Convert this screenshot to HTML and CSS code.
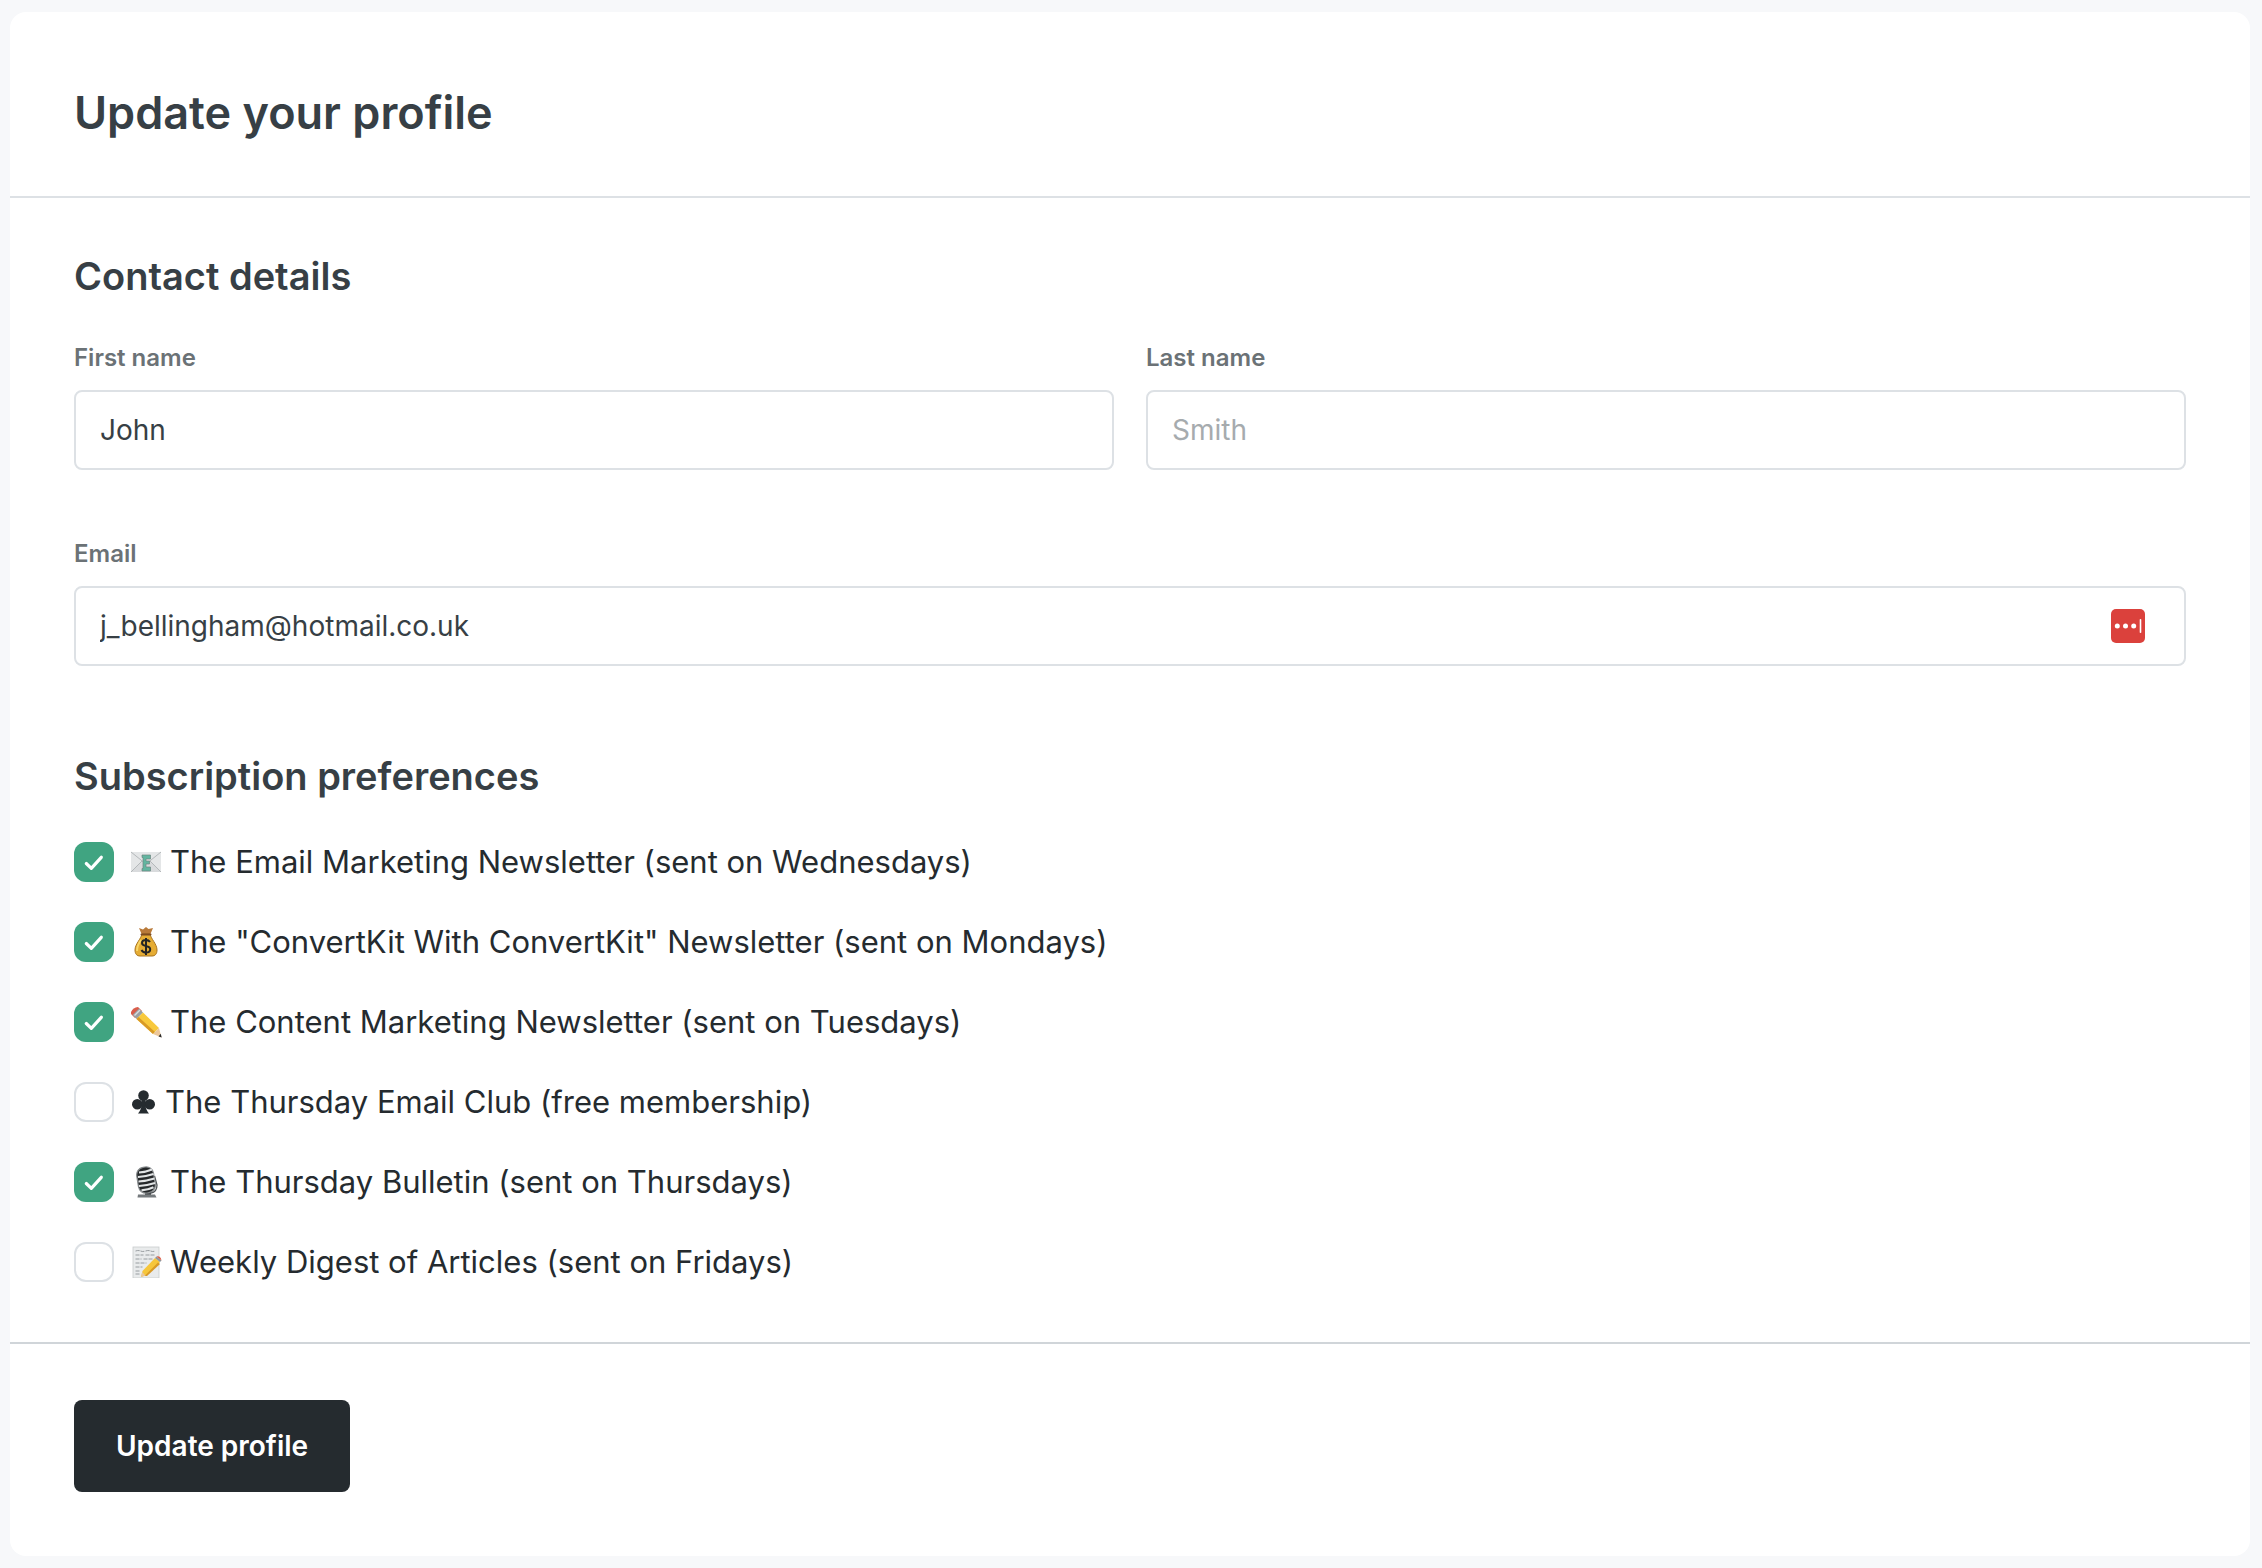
FILE: index.html
```html
<!DOCTYPE html>
<html lang="en">
<head>
<meta charset="utf-8">
<meta name="viewport" content="width=device-width, initial-scale=1">
<title>Update your profile</title>
<link rel="stylesheet" href="styles.css">
</head>
<body>
<main class="card">
  <header class="card-header">
    <h1 class="title">Update your profile</h1>
  </header>
  <form class="form">
    <div class="form-body">
      <section class="section">
        <h2 class="heading">Contact details</h2>
        <div class="fields">
          <div class="field">
            <label class="label" for="first-name">First name</label>
            <input class="input" id="first-name" type="text" value="John">
          </div>
          <div class="field">
            <label class="label" for="last-name">Last name</label>
            <input class="input" id="last-name" type="text" placeholder="Smith">
          </div>
          <div class="field field-wide">
            <label class="label" for="email">Email</label>
            <div class="input-wrap">
              <input class="input" id="email" type="email" value="j_bellingham@hotmail.co.uk">
              <svg class="vault-icon" viewBox="0 0 34 34" aria-hidden="true">
                <rect width="34" height="34" rx="5" fill="#db413c"/>
                <circle cx="6.300" cy="17" r="2.500" fill="#fff"/><circle cx="14.500" cy="17" r="2.500" fill="#fff"/><circle cx="22.700" cy="17" r="2.500" fill="#fff"/>
                <rect x="28.700" y="10" width="1.600" height="14" rx=".8" fill="#fff"/>
              </svg>
            </div>
          </div>
        </div>
      </section>
      <section class="section">
        <h2 class="heading">Subscription preferences</h2>
        <ul class="options">
          <li><label class="option"><input class="check" type="checkbox" checked>
            <svg class="emoji" viewBox="0 0 32 32" aria-hidden="true">
              <rect x="1" y="6" width="30" height="20" fill="#e4e6e7"/>
              <path d="M1 26 12 15l4 3 4-3 11 11z" fill="#d9dbdd"/>
              <path d="M1 6l15 12L31 6M1 26l11-11M31 26 20 15" fill="none" stroke="#b4b8ba" stroke-width="1"/>
              <path d="M12 9h8.500v4H16v2h3.500v3H16v3h4.500v4H12v-2.500h1v-11h-1z" fill="#62b5a0" stroke="#6d8580" stroke-width=".7"/>
            </svg>
            <span>The Email Marketing Newsletter (sent on Wednesdays)</span></label></li>
          <li><label class="option"><input class="check" type="checkbox" checked>
            <svg class="emoji" viewBox="0 0 32 32" aria-hidden="true">
              <path d="M12 9 9 2l4 1.500L16 1l2.500 2L23 2l-3 7z" fill="#b97a3a"/>
              <path d="M12 8h8c1 5 7 10 7 16 0 4-2 6-5 6H10c-3 0-5-2-5-6 0-6 6-11 7-16z" fill="#e5ac34" stroke="#a9741f" stroke-width="1"/>
              <path d="M11 14c-3 4-4 7-4 11" fill="none" stroke="#f8d568" stroke-width="2"/>
              <path d="M11.500 8.500h9" stroke="#7d4b20" stroke-width="2" stroke-linecap="round"/>
              <path d="M20 16c-1-1.500-2.500-2-4-2-2.500 0-4 1.300-4 3s1.500 2.500 4 3 4.200 1.300 4.200 3.200-1.700 3.300-4.200 3.300c-2 0-3.700-.8-4.500-2.500M16 12v17" fill="none" stroke="#242424" stroke-width="2"/>
            </svg>
            <span>The "ConvertKit With ConvertKit" Newsletter (sent on Mondays)</span></label></li>
          <li><label class="option"><input class="check" type="checkbox" checked>
            <svg class="emoji" viewBox="0 0 32 32" aria-hidden="true">
              <path d="M1 6q2-4.500 7-5l4 4-7 7-4-4z" fill="#d95d4b"/>
              <path d="M2.500 9 9 2.500l4 4L6.500 13z" fill="#9aa0a3"/>
              <path d="M4.500 9.500 10 4" stroke="#d8dcde" stroke-width="1.500"/>
              <path d="M6.500 13 13 6.500 29 22l-6 6z" fill="#f8c93c"/>
              <path d="M6.500 13l2-2L25 26l-2 2z" fill="#d99a25"/>
              <path d="M23 28l6-6 2.500 9.500z" fill="#ecc79a"/>
              <path d="M28.500 30.500l2.300-2.800.9 3.900z" fill="#2c2c2c"/>
            </svg>
            <span>The Content Marketing Newsletter (sent on Tuesdays)</span></label></li>
          <li><label class="option"><input class="check" type="checkbox">
            <svg class="emoji emoji-club" viewBox="0 0 27 32" aria-hidden="true">
              <g fill="#252b2f"><circle cx="13.500" cy="9.500" r="5.300"/><circle cx="7.300" cy="18.200" r="5.300"/><circle cx="19.700" cy="18.200" r="5.300"/><path d="M11.500 11h4v8c.3 4 1.500 6 3.500 8.500H8c2-2.500 3.200-4.500 3.500-8.500z"/></g>
            </svg>
            <span>The Thursday Email Club (free membership)</span></label></li>
          <li><label class="option"><input class="check" type="checkbox" checked>
            <svg class="emoji" viewBox="0 0 32 32" aria-hidden="true">
              <path d="M15 24h6v5h-6z" fill="#44484b"/>
              <path d="M8 28.500h17l1.500 3h-19z" fill="#74797c"/>
              <path d="M24.500 10 27 19q0 7-6 8" fill="none" stroke="#4e5356" stroke-width="1.300"/>
              <rect x="7.500" y="1" width="17" height="26" rx="7.500" fill="#25282a" stroke="#85898b" stroke-width="1.200" transform="rotate(-9 16 14)"/>
              <path d="M9 6.500q7-.5 13-3M8 11q8-.5 15.500-3M8.500 15.500q8-.5 16-3M9 20q8-.5 16-3M11.500 24.300q7-.5 12-3" fill="none" stroke="#e2e5e6" stroke-width="2.200"/>
            </svg>
            <span>The Thursday Bulletin (sent on Thursdays)</span></label></li>
          <li><label class="option"><input class="check" type="checkbox">
            <svg class="emoji" viewBox="0 0 32 32" aria-hidden="true">
              <rect x="3" y="1" width="26" height="31" fill="#e9ebec" stroke="#c9cccd" stroke-width=".8"/>
              <path d="M5.500 5q3-1 5 0t5 0 5 0 5 0M5.500 9h8m2 0h9M5.500 13h6m2 0h9M5.500 17h11M5.500 21h7M5.500 25h5M5.500 28h4" fill="none" stroke="#989da0" stroke-width="1" stroke-dasharray="4 1"/>
              <path d="M11 31l1.500-6L25 12l5 4-13 13z" fill="#f6c63b"/>
              <path d="M14.500 30 28 16.500l2 1.500-13 12z" fill="#d99a25"/>
              <path d="M25 12l1.500-1.500 5 4L30 16z" fill="#8f969a"/>
              <path d="M26.500 10.500q4-1 5 4z" fill="#dd5e49"/>
              <path d="M11 31l1.200-5 3.300 3.500z" fill="#e9c79c"/>
            </svg>
            <span>Weekly Digest of Articles (sent on Fridays)</span></label></li>
        </ul>
      </section>
    </div>
    <footer class="card-footer">
      <button class="button" type="submit">Update profile</button>
    </footer>
  </form>
</main>
</body>
</html>
```
FILE: styles.css
```css
* { box-sizing: border-box; }
body {
  margin: 0;
  padding: 12px 12px 12px 10px;
  background: #f7f8fa;
  color: #252b2f;
  font-family: Inter, "Liberation Sans", sans-serif;
}
.card { background: #fff; border-radius: 16px; }
.card-header { padding: 73px 64px 55px; border-bottom: 2px solid #dde1e5; }
.title, .heading { margin: 0; color: #373f45; font-weight: 600; }
.title { font-size: 45px; line-height: 56px; }
.heading { font-size: 38px; line-height: 48px; }
.form-body { display: flex; flex-direction: column; gap: 86px; padding: 54px 64px 60px; }
.section { display: flex; flex-direction: column; gap: 42px; }
.fields { display: grid; grid-template-columns: 1fr 1fr; gap: 68px 32px; }
.field { display: flex; flex-direction: column; gap: 16px; }
.field-wide { grid-column: 1 / -1; }
.label { color: #6b7276; font-size: 24px; line-height: 32px; font-weight: 600; }
.input {
  width: 100%;
  height: 80px;
  padding: 0 24px;
  border: 2px solid #dde1e5;
  border-radius: 8px;
  background: #fff;
  color: #373f45;
  font: inherit;
  font-size: 28px;
}
.input::placeholder { color: #a6abae; opacity: 1; }
.input-wrap { position: relative; }
.vault-icon { position: absolute; top: 23px; right: 41px; width: 34px; height: 34px; }
.options { display: flex; flex-direction: column; gap: 40px; margin: 0; padding: 0; list-style: none; }
.option { display: flex; align-items: center; font-size: 31px; line-height: 40px; }
.check {
  appearance: none;
  flex: none;
  width: 40px;
  height: 40px;
  margin: 0 16px 0 0;
  border: 2px solid #dde1e5;
  border-radius: 12px;
  background: #fff;
}
.check:checked {
  border: 0;
  background: #40a481 url("data:image/svg+xml,%3Csvg xmlns='http://www.w3.org/2000/svg' viewBox='0 0 40 40'%3E%3Cpath d='M12.300 21.500l5 4.800 10-11' fill='none' stroke='white' stroke-width='3.200' stroke-linecap='round' stroke-linejoin='round'/%3E%3C/svg%3E") center / 40px 40px;
}
.emoji { flex: none; width: 32px; height: 32px; margin-right: 8px; }
.emoji-club { width: 27px; }
.card-footer { padding: 56px 64px 64px; border-top: 2px solid #d0d5d9; }
.button {
  display: block;
  height: 92px;
  padding: 0 42px;
  border: 0;
  border-radius: 8px;
  background: #252b2f;
  color: #fff;
  font: inherit;
  font-size: 28px;
  font-weight: 600;
}
```
